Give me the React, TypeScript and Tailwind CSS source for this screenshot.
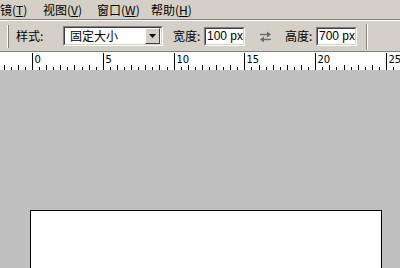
import React from "react";

const cjk = { fontFamily: '"Noto Sans CJK SC", "Liberation Sans", sans-serif' };

const menus = [
  { label: "镜", key: "T", x: "w-[43px]" },
  { label: "视图", key: "V", x: "w-[54px]" },
  { label: "窗口", key: "W", x: "w-[54px]" },
  { label: "帮助", key: "H", x: "w-[50px]" },
];

const Sunken = ({ className, children }: { className: string; children: React.ReactNode }) => (
  <div className={`shrink-0 border border-t-[#808080] border-l-[#808080] border-b-white border-r-white ${className}`}>
    <div className="h-full w-full border border-t-[#404040] border-l-[#404040] border-b-[#d4d0c8] border-r-[#d4d0c8] bg-white flex items-center overflow-hidden">
      {children}
    </div>
  </div>
);

const Ruler = () => {
  const unit = 14.16;
  const zero = 32;
  const ticks: React.ReactNode[] = [];
  for (let i = -4; i <= 52; i++) {
    const x = Math.round(zero + (i * unit) / 2) + 0.5;
    if (x < 0 || x > 400) continue;
    if (i % 10 === 0) {
      ticks.push(<line key={i} x1={x} x2={x} y1={0} y2={17} stroke="#000" strokeWidth={1} />);
      ticks.push(
        <text key={"t" + i} x={x + 2} y={10} fontSize={10} fontFamily='"DejaVu Sans", sans-serif' fill="#000">
          {i / 2}
        </text>
      );
    } else {
      const h = i % 2 === 0 ? 5 : 3;
      ticks.push(<line key={i} x1={x} x2={x} y1={17 - h} y2={17} stroke="#000" strokeWidth={1} />);
    }
  }
  return (
    <svg width={400} height={17} className="block shrink-0 bg-white">
      {ticks}
    </svg>
  );
};

const SwapIcon = () => (
  <svg width={13} height={11} viewBox="0 0 13 11" className="block">
    <path d="M1 3.5h8" stroke="#6b6b6b" strokeWidth={1.4} />
    <path d="M8 0.5l4 3-4 3z" fill="#6b6b6b" />
    <path d="M4 8.5h8" stroke="#6b6b6b" strokeWidth={1.4} />
    <path d="M5 5.5l-4 3 4 3z" fill="#6b6b6b" />
  </svg>
);

export default function App() {
  return (
    <div className="w-[400px] h-[268px] overflow-hidden flex flex-col bg-[#d4d0c8] text-[12px] text-black" style={cjk}>
      <div className="h-[19px] flex items-center shrink-0">
        {menus.map((m) => (
          <div key={m.key} className={`${m.x} shrink-0 leading-none whitespace-nowrap`}>
            {m.label}(<span className="underline">{m.key}</span>)
          </div>
        ))}
      </div>
      <div className="h-px bg-[#808080] shrink-0" />
      <div className="h-px bg-white shrink-0" />
      <div className="h-[30px] flex items-center shrink-0">
        <div className="ml-[7px] w-[2px] h-[23px] border-l border-l-white border-r border-r-[#808080]" />
        <span className="ml-[7px] w-[47px]">样式:</span>
        <Sunken className="w-[100px] h-[20px]">
          <span className="ml-[5px] flex-1">固定大小</span>
          <div className="w-[15px] h-[16px] mr-px bg-[#d4d0c8] border border-t-white border-l-white border-b-[#404040] border-r-[#404040] flex items-center justify-center">
            <svg width={7} height={4} viewBox="0 0 7 4"><path d="M0 0h7L3.5 4z" fill="#000" /></svg>
          </div>
        </Sunken>
        <span className="ml-[10px] w-[31px] whitespace-nowrap">宽度:</span>
        <Sunken className="w-[41px] h-[19px]">
          <span className="ml-px whitespace-nowrap leading-none" style={{ fontFamily: '"Liberation Sans", sans-serif' }}>100 px</span>
        </Sunken>
        <div className="ml-[14px] w-[26px]">
          <SwapIcon />
        </div>
        <span className="w-[31px] whitespace-nowrap">高度:</span>
        <Sunken className="w-[41px] h-[19px]">
          <span className="ml-px whitespace-nowrap leading-none" style={{ fontFamily: '"Liberation Sans", sans-serif' }}>700 px</span>
        </Sunken>
        <div className="ml-[9px] w-[2px] h-[25px] border-l border-l-[#808080] border-r border-r-white" />
      </div>
      <div className="h-px bg-[#808080] shrink-0" />
      <div className="h-px bg-white shrink-0" />
      <Ruler />
      <div className="flex-1 bg-[#c0c0c0] pt-[140px] pl-[30px]">
        <div className="w-[352px] h-[100px] bg-white border border-black" />
      </div>
    </div>
  );
}
